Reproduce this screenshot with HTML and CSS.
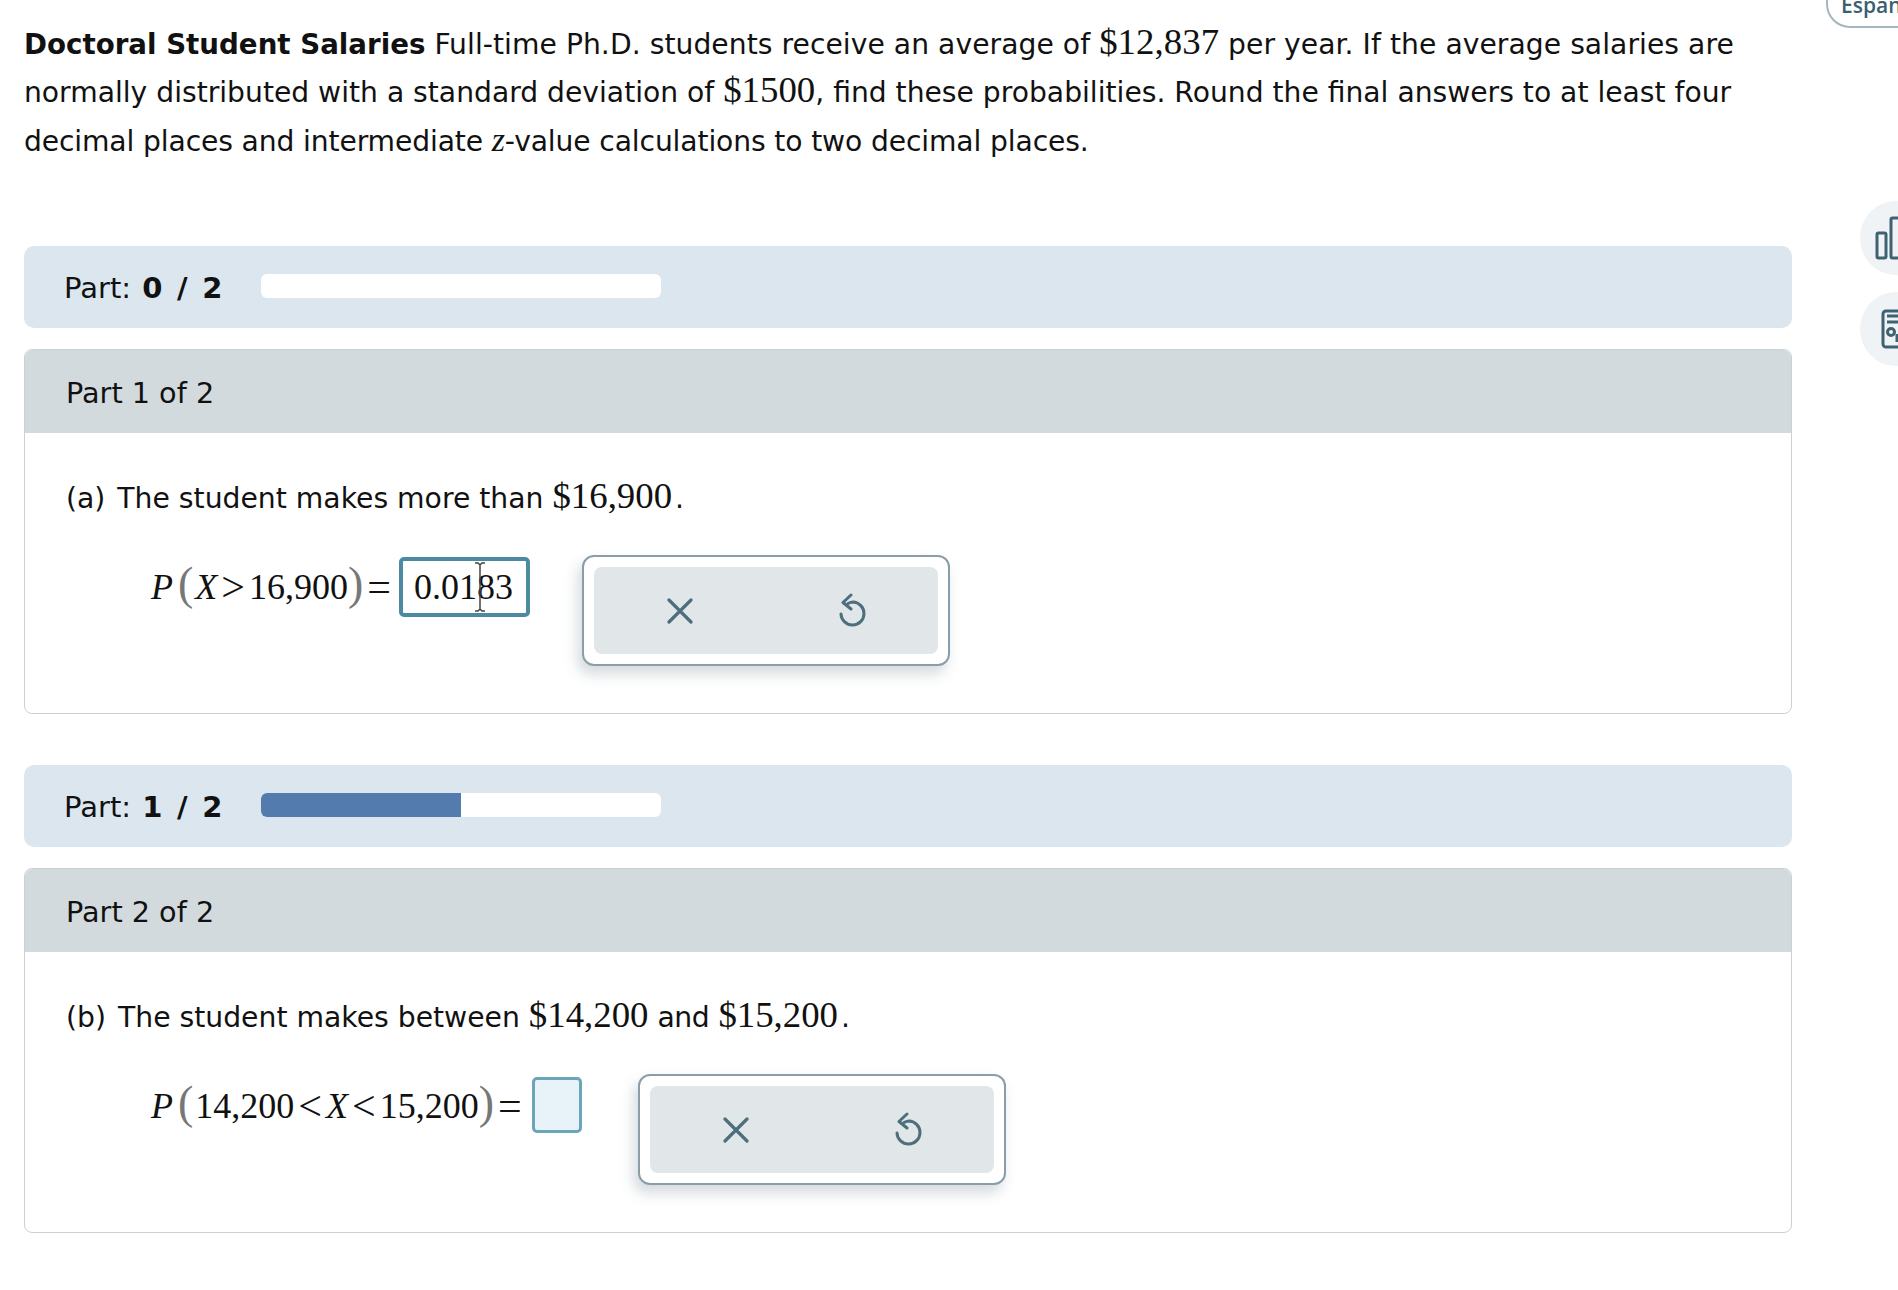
FILE: index.html
```html
<!DOCTYPE html>
<html lang="en">

<head>
    <meta charset="UTF-8">
    <meta name="viewport" content="width=device-width, initial-scale=1.0">
    <title>Doctoral Student Salaries</title>
    <link rel="stylesheet" href="styles.css">
</head>

<body>
    <button class="lang-pill">Español</button>

    <div class="side-btn side-btn-top">
        <svg width="60" height="50" viewBox="0 0 60 50" fill="none" stroke="#3f6272" stroke-width="3" stroke-linejoin="round">
            <rect x="17" y="20" width="9" height="25" rx="1.5"></rect>
            <rect x="31" y="5" width="11" height="40" rx="1.5"></rect>
        </svg>
    </div>
    <div class="side-btn side-btn-bottom">
        <svg width="60" height="50" viewBox="0 0 60 50" fill="none" stroke="#3f6272" stroke-width="3" stroke-linejoin="round">
            <rect x="23" y="7" width="36" height="36" rx="3"></rect>
            <path d="M27 12h26M27 18h26M37 30v8"></path>
            <circle cx="31" cy="28" r="3.500"></circle>
        </svg>
    </div>

    <div class="container">
        <p class="question">
            <strong>Doctoral Student Salaries</strong> <span class="loose">Full-time Ph.D. students receive an average of <span class="num">$12,837</span> per year. If the average salaries are</span> normally distributed with a standard deviation of <span class="num">$1500</span>, find these probabilities. Round the final answers to at least four <span class="tight">decimal places and intermediate <i class="var">z</i>-value calculations to two decimal places.</span>
        </p>

        <div class="progress-bar first">
            <span class="progress-label">Part: <b>0 / 2</b></span>
            <div class="track"></div>
        </div>

        <div class="part-card">
            <div class="part-head">Part 1 of 2</div>
            <div class="part-body">
                <p class="part-text"><span class="tag">(a)</span> The student makes more than <span class="num">$16,900</span><span class="stop">.</span></p>
                <div class="answer-row">
                    <div class="math">
                        <i class="m-p">P</i><span class="paren open">(</span><i>X</i><span class="op">&gt;</span>16,900<span class="paren close">)</span><span class="op eq">=</span>
                    </div>
                    <div class="input filled">
                        0.0183
                        <svg class="cursor" width="14" height="50" viewBox="0 0 14 50" fill="none" stroke="#444" stroke-width="1.5">
                            <path d="M2 1h3l2 2 2-2h3M7 3v44M2 49h3l2-2 2 2h3"></path>
                        </svg>
                    </div>
                    <div class="tools">
                        <div class="tools-inner">
                            <div class="tool">
                                <svg width="26" height="26" viewBox="0 0 26 26" fill="none" stroke="#4d6f7d" stroke-width="3.200" stroke-linecap="round"><path d="M2 2l22 22M24 2L2 24"></path></svg>
                            </div>
                            <div class="tool">
                                <svg width="28" height="35" viewBox="0 0 28 35" fill="none" stroke="#4d6f7d" stroke-width="3" stroke-linecap="round" stroke-linejoin="round"><path d="M10 10.5c2-1 3.500-1.500 5-1.500a11.500 11.500 0 1 1-12 12"></path><path d="M13 2L5 9.500l8 6.500"></path></svg>
                            </div>
                        </div>
                    </div>
                </div>
            </div>
        </div>

        <div class="progress-bar second">
            <span class="progress-label">Part: <b>1 / 2</b></span>
            <div class="track"><div class="fill half"></div></div>
        </div>

        <div class="part-card">
            <div class="part-head">Part 2 of 2</div>
            <div class="part-body">
                <p class="part-text"><span class="tag">(b)</span> The student makes between <span class="num">$14,200</span> <span class="and">and</span> <span class="num">$15,200</span><span class="stop">.</span></p>
                <div class="answer-row">
                    <div class="math">
                        <i class="m-p">P</i><span class="paren open">(</span>14,200<span class="op">&lt;</span><i>X</i><span class="op">&lt;</span>15,200<span class="paren close">)</span><span class="op eq">=</span>
                    </div>
                    <div class="input empty"></div>
                    <div class="tools">
                        <div class="tools-inner">
                            <div class="tool">
                                <svg width="26" height="26" viewBox="0 0 26 26" fill="none" stroke="#4d6f7d" stroke-width="3.200" stroke-linecap="round"><path d="M2 2l22 22M24 2L2 24"></path></svg>
                            </div>
                            <div class="tool">
                                <svg width="28" height="35" viewBox="0 0 28 35" fill="none" stroke="#4d6f7d" stroke-width="3" stroke-linecap="round" stroke-linejoin="round"><path d="M10 10.5c2-1 3.500-1.500 5-1.500a11.500 11.500 0 1 1-12 12"></path><path d="M13 2L5 9.500l8 6.500"></path></svg>
                            </div>
                        </div>
                    </div>
                </div>
            </div>
        </div>
    </div>
</body>

</html>
```

FILE: styles.css
```css
html, body {
    height: 100%;
    overflow: hidden;
}

body {
    margin: 0;
    background: #fff;
    color: #111;
    font-family: "DejaVu Sans", sans-serif;
    font-size: 28px;
    position: relative;
}

.container {
    width: 1768px;
    padding: 21px 0 0 24px;
}

.question {
    margin: 0;
    font-size: 28.2px;
    line-height: 48.4px;
}

.question strong {
    font-size: 27.7px;
}

.loose {
    letter-spacing: 0.05px;
}

.tight {
    letter-spacing: -0.13px;
}

.num {
    font-family: "Liberation Serif", serif;
    font-size: 36.8px;
    line-height: 0;
}

.var {
    font-family: "Liberation Serif", serif;
    font-size: 34px;
    line-height: 0;
}

.stop {
    margin-left: 3px;
}

.tag {
    margin-right: 3px;
}

.and {
    letter-spacing: -0.4px;
}

.progress-bar {
    height: 82px;
    background: #dce6ef;
    border-radius: 10px;
    display: flex;
    align-items: center;
    padding-left: 40px;
}

.progress-bar.first {
    margin-top: 80px;
}

.progress-bar.second {
    margin-top: 51px;
}

.progress-label {
    width: 197px;
    white-space: nowrap;
    font-size: 29px;
    padding-top: 2px;
}

.progress-label b {
    word-spacing: 4.5px;
    margin-left: 2px;
}

.track {
    width: 400px;
    height: 24px;
    background: #fff;
    border-radius: 6px;
    margin-top: -2px;
    overflow: hidden;
}

.fill {
    height: 100%;
    background: #547bae;
}

.half {
    width: 50%;
}

.part-card {
    margin-top: 21px;
    border: 1px solid #c9d1d6;
    border-radius: 8px;
}

.part-head {
    height: 83px;
    line-height: 86px;
    background: #d3dadd;
    padding-left: 41px;
    border-radius: 8px 8px 0 0;
    font-size: 28.7px;
}

.part-body {
    padding: 42px 41px 47px;
}

.part-text {
    margin: 0 0 32px;
    font-size: 28.25px;
    line-height: 48px;
}

.answer-row {
    display: flex;
    align-items: flex-start;
    padding-left: 85px;
}

.math {
    font-family: "Liberation Serif", serif;
    font-size: 36px;
    line-height: 60px;
    white-space: nowrap;
    display: flex;
    align-items: center;
    margin-top: 2px;
    color: #111;
}

.m-p {
    margin-right: 5px;
}

.paren {
    font-size: 46px;
    line-height: 60px;
    color: #777;
    margin-top: -6px;
}

.paren.open {
    margin-right: 2px;
}

.op {
    font-size: 42px;
    margin: 0 4px;
}

.op.eq {
    margin: 0 8px 0 4px;
}

.input {
    position: relative;
    box-sizing: border-box;
    margin-top: 2px;
    font-family: "Liberation Serif", serif;
    font-size: 36px;
}

.input.filled {
    width: 131px;
    height: 60px;
    line-height: 52px;
    border: 4px solid #4b8aa0;
    border-radius: 5px;
    padding-left: 11px;
}

.input.empty {
    width: 50px;
    height: 56px;
    margin: 3px 4px 0 2px;
    background: #e8f3f9;
    border: 3px solid #6aa5b8;
    border-radius: 5px;
}

.cursor {
    position: absolute;
    left: 70px;
    top: 1px;
}

.tools {
    box-sizing: border-box;
    width: 368px;
    height: 111px;
    margin-left: 52px;
    padding: 10px;
    background: #fff;
    border: 2px solid #8a9ea9;
    border-radius: 12px;
    box-shadow: -4px 8px 14px rgba(60, 85, 100, 0.22);
}

.tools-inner {
    display: flex;
    height: 100%;
    background: #e1e6e8;
    border-radius: 8px;
}

.tool {
    flex: 1;
    display: flex;
    align-items: center;
    justify-content: center;
}

.lang-pill {
    position: absolute;
    left: 1826px;
    top: -28px;
    width: 120px;
    height: 56px;
    background: #fff;
    border: 2px solid #a5b5be;
    border-radius: 24px;
    padding: 0 0 0 13px;
    text-align: left;
    color: #3a5f70;
    font-family: "Open Sans", sans-serif;
    font-size: 21px;
    font-weight: 600;
    line-height: 62px;
}

.side-btn {
    position: absolute;
    left: 1860px;
    width: 72px;
    height: 74px;
    border-radius: 50%;
    background: #eff3f5;
    display: flex;
    align-items: center;
    overflow: hidden;
}

.side-btn-top {
    top: 201px;
}

.side-btn-bottom {
    top: 292px;
}

.side-btn svg {
    flex: none;
}
```
